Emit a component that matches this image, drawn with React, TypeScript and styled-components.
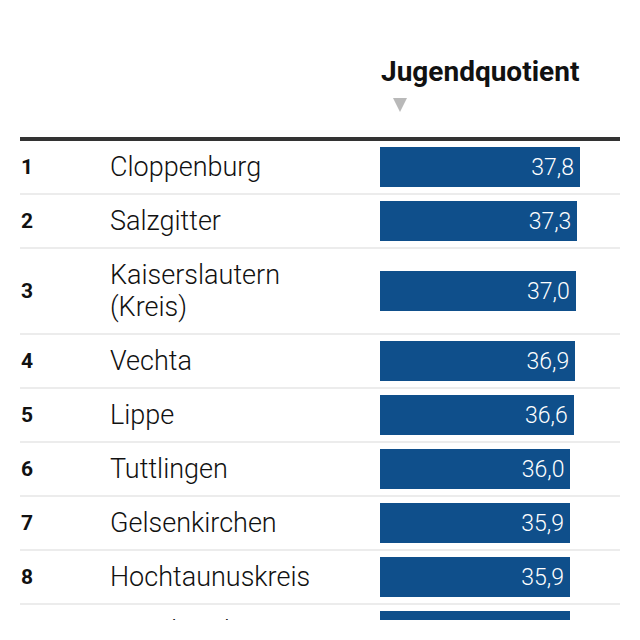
import React from 'react';
import styled, { createGlobalStyle } from 'styled-components';

const GlobalStyle = createGlobalStyle`
  *, *::before, *::after {
    box-sizing: border-box;
  }
  html, body {
    margin: 0;
    padding: 0;
    background: #fff;
  }
  body {
    font-family: Roboto, "Liberation Sans", sans-serif;
    color: #111;
  }
`;

// frame of the embed, clips the list like the iframe does
const Frame = styled.div`
  height: 620px;
  overflow: hidden;
  padding: 0 20px;
`;

const Grid = styled.div`
  display: grid;
  grid-template-columns: 90px 270px 1fr;
`;

const HeadCell = styled.div`
  padding-top: 56px;
  padding-bottom: 25px;
  border-bottom: 4px solid #333;
`;

const HeadTitle = styled.div`
  font-weight: 700;
  font-size: 28px;
  line-height: 32px;
  padding-left: 1px;
`;

const SortArrow = styled.div`
  margin: 10px 0 0 13px;
  width: 0;
  height: 0;
  border-left: 7px solid transparent;
  border-right: 7px solid transparent;
  border-top: 14px solid #b9b9b9;
`;

const Cell = styled.div`
  display: flex;
  align-items: center;
  border-bottom: 2px solid #ececec;
  min-height: 54px;
`;

const Rank = styled(Cell)`
  font-weight: 700;
  font-size: 21px;
  padding-left: 1px;
`;

const Name = styled(Cell)`
  font-weight: 300;
  font-size: 27px;
  line-height: 32px;
  padding: 10px 40px 10px 0;
`;

const BarCell = styled(Cell)`
  padding: 6px 0;
`;

const Bar = styled.div`
  height: 40px;
  background: #0f4f8b;
  color: #fff;
  font-weight: 300;
  font-size: 23px;
  display: flex;
  align-items: center;
  justify-content: flex-end;
  padding-right: 6px;
`;

const rows = [
  { name: 'Cloppenburg', value: 37.8 },
  { name: 'Salzgitter', value: 37.3 },
  { name: 'Kaiserslautern (Kreis)', value: 37.0 },
  { name: 'Vechta', value: 36.9 },
  { name: 'Lippe', value: 36.6 },
  { name: 'Tuttlingen', value: 36.0 },
  { name: 'Gelsenkirchen', value: 35.9 },
  { name: 'Hochtaunuskreis', value: 35.9 },
  { name: 'Osnabrück', value: 35.9 },
];

const MAX = 37.8;
const MAX_W = 200;

export default function App() {
  return (
    <>
      <GlobalStyle />
      <Frame>
        <Grid>
          <HeadCell />
          <HeadCell />
          <HeadCell>
            <HeadTitle>Jugendquotient</HeadTitle>
            <SortArrow />
          </HeadCell>
          {rows.map((r, i) => (
            <React.Fragment key={r.name}>
              <Rank>{i + 1}</Rank>
              <Name>{r.name}</Name>
              <BarCell>
                <Bar style={{ width: (r.value / MAX) * MAX_W }}>
                  {r.value.toFixed(1).replace('.', ',')}
                </Bar>
              </BarCell>
            </React.Fragment>
          ))}
        </Grid>
      </Frame>
    </>
  );
}
